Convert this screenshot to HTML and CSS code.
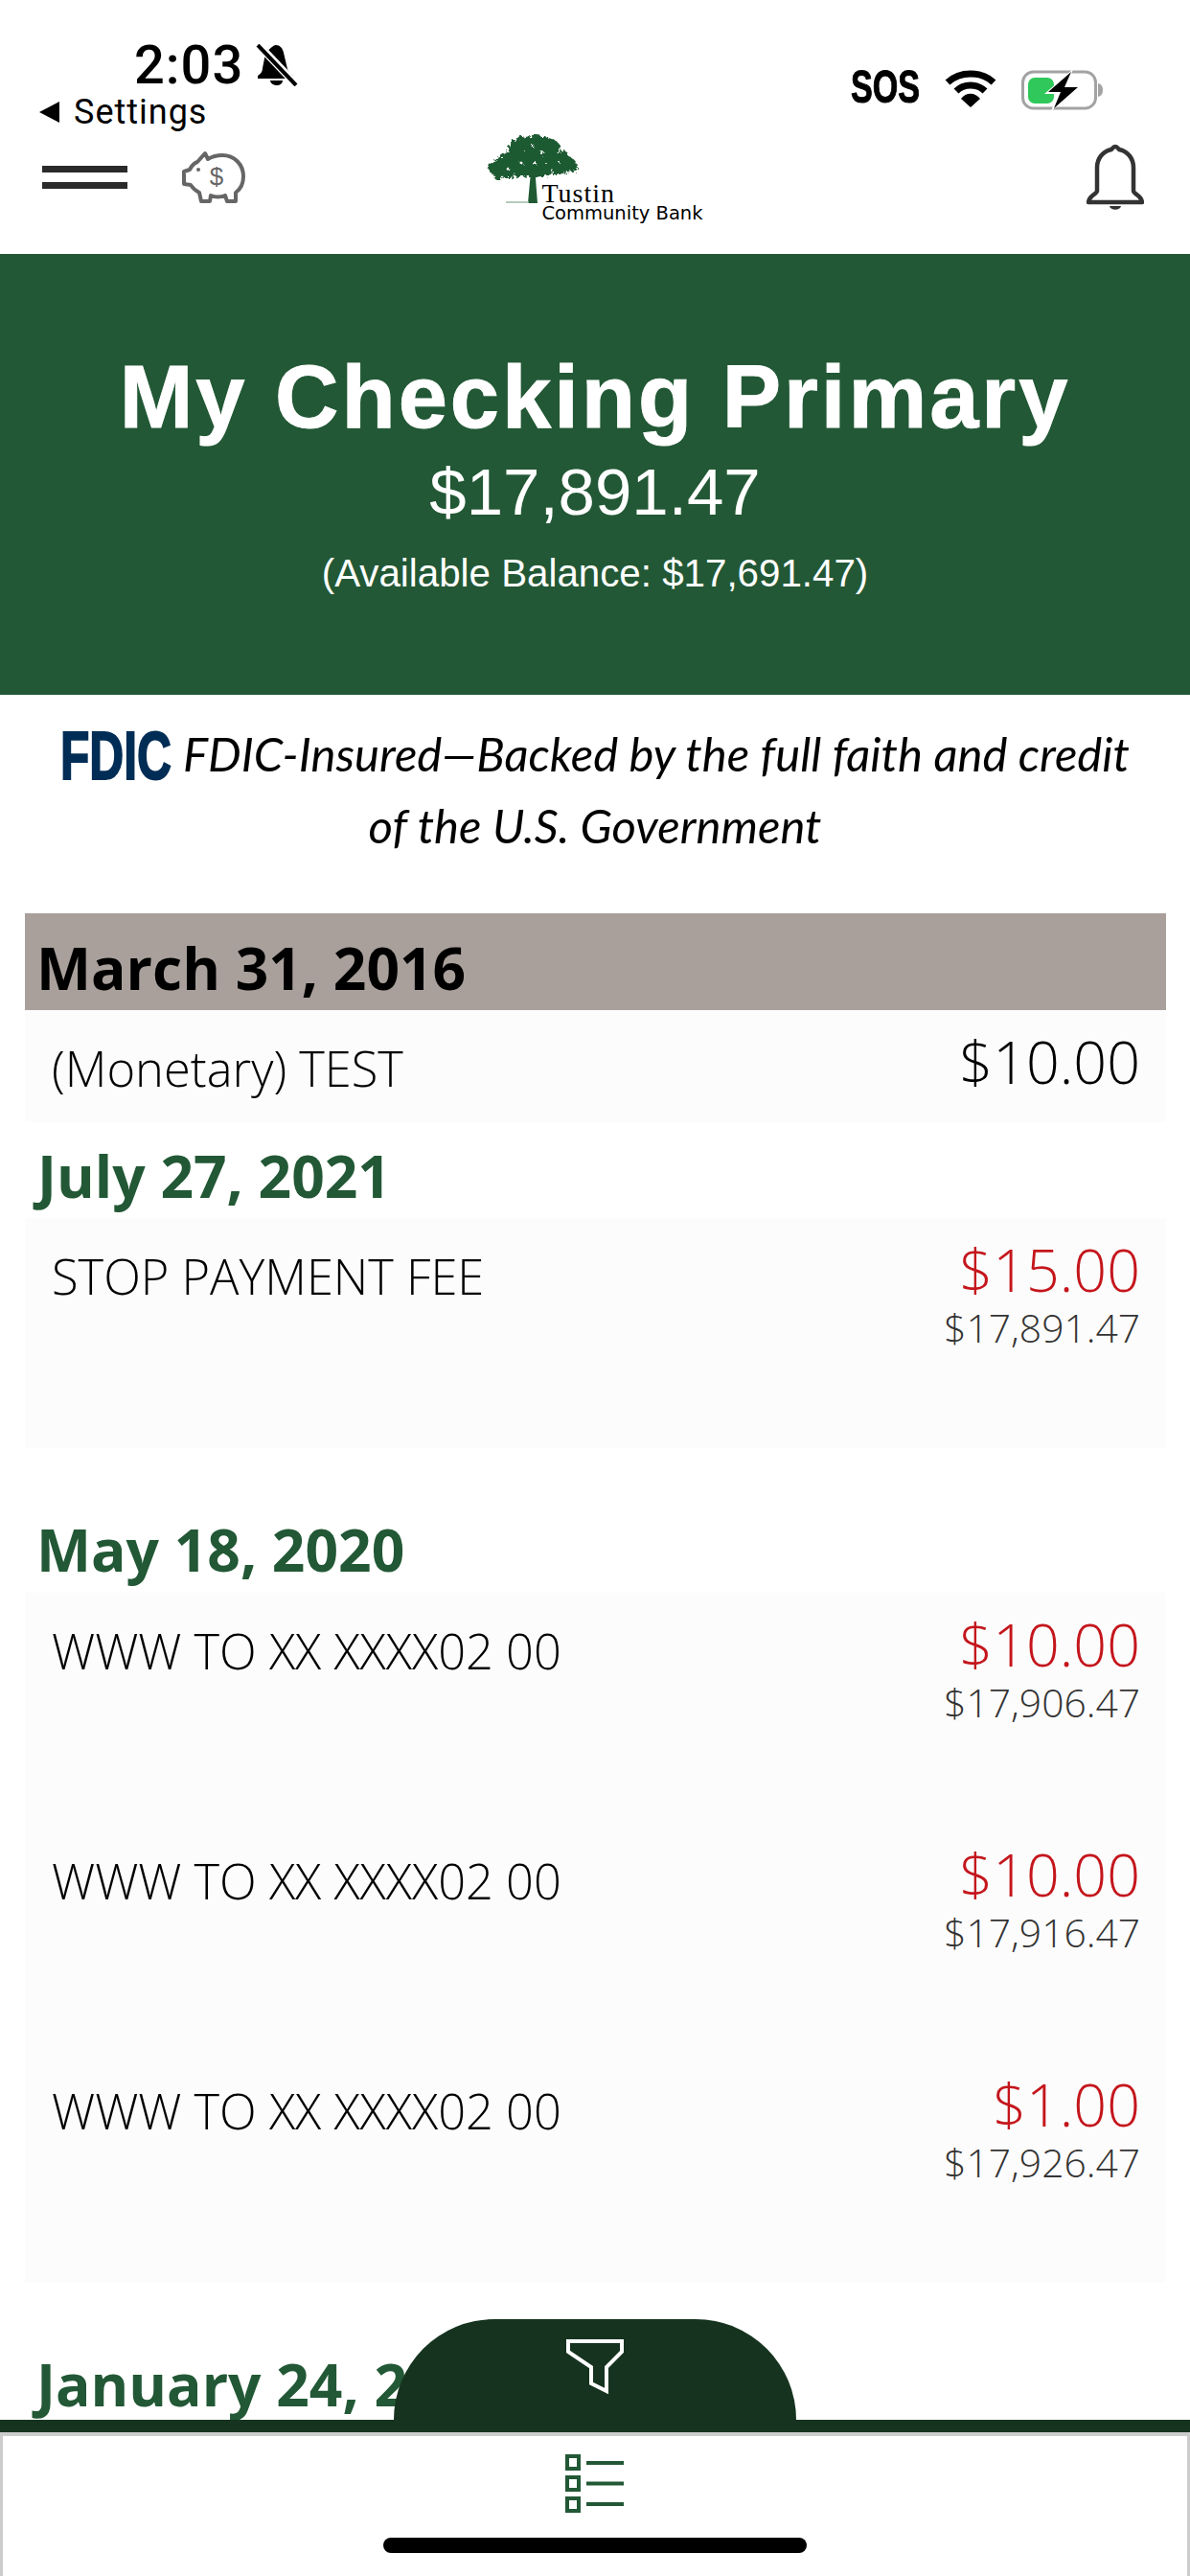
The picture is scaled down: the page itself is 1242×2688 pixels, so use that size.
FILE: index.html
```html
<!DOCTYPE html>
<html>
    <head>
        <meta charset="utf-8">
        <title>My Checking Primary</title>
        <link rel="stylesheet" href="styles.css">
    </head>
    <body>
        <div class="page">
            <div class="top">
                <div class="status">
                    <div class="status_left">
                        <div class="time_row">
                            <span class="time">2:03</span>
                            <svg class="mute" width="44" height="44" viewBox="0 0 44 44">
                                <path d="M21 1c4 0 7 3 8 8l4 17c1 3 3 5 6 7v3H2v-3c3-2 5-4 5-8l2-10c1-6 5-10 8-12 1-1 2-2 4-2z" fill="#000"/>
                                <path d="M15 38h13c0 3-3 5-6 5s-7-2-7-5z" fill="#000"/>
                                <path d="M2 0L42 42" stroke="#fff" stroke-width="8"/>
                                <path d="M2 1L42 43" stroke="#000" stroke-width="4"/>
                            </svg>
                        </div>
                        <div class="back_row">
                            <svg width="24" height="24" viewBox="0 0 24 24"><path d="M22 1V23L1 12Z" fill="#000"/></svg>
                            <span>Settings</span>
                        </div>
                    </div>
                    <div class="status_right">
                        <div class="sos_box"><span class="sos">SOS</span></div>
                        <svg width="54" height="40" viewBox="0 0 54 40">
                            <path d="M3 14C16 2 38 2 51 14" fill="none" stroke="#000" stroke-width="7"/>
                            <path d="M12 23C20 15 34 15 42 23" fill="none" stroke="#000" stroke-width="7"/>
                            <path d="M17 31C22 24 32 24 37 31L27 40Z" fill="#000"/>
                        </svg>
                        <svg width="88" height="44" viewBox="0 0 88 44">
                            <rect x="1.5" y="3" width="76" height="38" rx="11" fill="#fff" stroke="#a3a3a3" stroke-width="3"/>
                            <rect x="7" y="9" width="27" height="27" rx="7" fill="#30c85a"/>
                            <path d="M80 15c4 1 5 4 5 7s-1 6-5 7z" fill="#a3a3a3"/>
                            <path d="M54 0L24 26H38L31 44L63 17H48Z" fill="#fff"/>
                            <path d="M52 3L28 24H41L34 41L59 19H45Z" fill="#000"/>
                        </svg>
                    </div>
                </div>
                <div class="nav">
                    <div class="nav_left">
                        <div class="burger"><div></div><div></div></div>
                        <svg class="piggy" width="66" height="56" viewBox="0 0 66 56">
                            <path d="M24 3l3 6c5-3 10-4 15-4 13 0 22 10 22 22 0 8-4 14-8 17v9h-9l-2-6c-5 2-10 2-15 0l-1 6h-9l-2-9c-4-2-7-5-9-8l-7-1V22l6-2c2-4 5-7 8-8z" fill="#fff" stroke="#666" stroke-width="4" stroke-linejoin="round"/>
                            <circle cx="17" cy="20" r="2" fill="#666"/>
                            <text x="36" y="36" class="piggy_sign">$</text>
                        </svg>
                    </div>
                    <div class="logo">
                        <svg width="96" height="74" viewBox="0 0 96 74">
                            <filter id="rough" x="-10%" y="-10%" width="120%" height="120%">
                                <feTurbulence type="fractalNoise" baseFrequency="0.35" numOctaves="2" seed="4"/>
                                <feDisplacementMap in="SourceGraphic" scale="7"/>
                            </filter>
                            <g filter="url(#rough)">
                                <g fill="#1f5a32">
                                    <ellipse cx="50" cy="14" rx="27" ry="12"/>
                                    <ellipse cx="46" cy="30" rx="36" ry="15"/>
                                    <ellipse cx="70" cy="31" rx="23" ry="11"/>
                                    <ellipse cx="22" cy="36" rx="20" ry="10"/>
                                    <circle cx="6" cy="34" r="5"/>
                                    <circle cx="12" cy="44" r="4"/>
                                    <circle cx="90" cy="34" r="5"/>
                                    <circle cx="36" cy="6" r="4"/>
                                    <circle cx="52" cy="4" r="4"/>
                                    <circle cx="66" cy="9" r="4"/>
                                    <circle cx="28" cy="20" r="6"/>
                                    <circle cx="80" cy="22" r="5"/>
                                </g>
                                <g fill="#fff">
                                    <circle cx="48" cy="12" r="1.5"/>
                                    <circle cx="58" cy="20" r="2"/>
                                    <circle cx="36" cy="30" r="1.5"/>
                                    <circle cx="50" cy="30" r="2"/>
                                    <circle cx="22" cy="36" r="1.5"/>
                                    <circle cx="68" cy="38" r="1.5"/>
                                    <circle cx="40" cy="18" r="1"/>
                                    <circle cx="62" cy="30" r="1"/>
                                    <circle cx="28" cy="42" r="1.5"/>
                                    <circle cx="76" cy="30" r="1"/>
                                </g>
                            </g>
                            <path d="M46 40H51V46L53 72H43L45 50Z" fill="#1f5a32"/>
                            <path d="M20 71H44" stroke="#9dbba6" stroke-width="1.5"/>
                        </svg>
                        <div class="logo_text">
                            <div class="logo_name">Tustin</div>
                            <div class="logo_sub">Community Bank</div>
                        </div>
                    </div>
                    <div class="nav_right">
                        <svg width="60" height="70" viewBox="0 0 60 70">
                            <path d="M30 3c2 0 3 2 4 3 9 2 15 9 15 19v24c0 4 8 4 9 12H2c1-8 9-8 9-12V25C11 15 17 8 26 6c1-1 2-3 4-3z" fill="none" stroke="#333" stroke-width="4.500" stroke-linejoin="round"/>
                            <path d="M24 65H36C35 70 25 70 24 65Z" fill="#333"/>
                        </svg>
                    </div>
                </div>
            </div>

            <div class="account">
                <div class="account_name">My Checking Primary</div>
                <div class="account_total">$17,891.47</div>
                <div class="account_avail">(Available Balance: $17,691.47)</div>
            </div>

            <div class="fdic">
                <span class="fdic_box"><span class="fdic_mark">FDIC</span></span>FDIC-Insured—Backed by the full faith and credit<br>of the U.S. Government
            </div>

            <div class="list">
                <div class="day day_pending">March 31, 2016</div>
                <div class="card">
                    <div class="row row_short">
                        <div class="label">(Monetary) TEST</div>
                        <div class="money"><div class="amount">$10.00</div></div>
                    </div>
                </div>

                <div class="day day_july">July 27, 2021</div>
                <div class="card">
                    <div class="row">
                        <div class="label">STOP PAYMENT FEE</div>
                        <div class="money"><div class="amount debit">$15.00</div><div class="balance">$17,891.47</div></div>
                    </div>
                </div>

                <div class="day day_gap">May 18, 2020</div>
                <div class="card">
                    <div class="row">
                        <div class="label">WWW TO XX XXXX02 00</div>
                        <div class="money"><div class="amount debit">$10.00</div><div class="balance">$17,906.47</div></div>
                    </div>
                    <div class="row">
                        <div class="label">WWW TO XX XXXX02 00</div>
                        <div class="money"><div class="amount debit">$10.00</div><div class="balance">$17,916.47</div></div>
                    </div>
                    <div class="row">
                        <div class="label">WWW TO XX XXXX02 00</div>
                        <div class="money"><div class="amount debit">$1.00</div><div class="balance">$17,926.47</div></div>
                    </div>
                </div>

                <div class="day day_last">January 24, 2020</div>
            </div>

            <div class="bottom">
                <div class="dome">
                    <svg width="60" height="58" viewBox="0 0 60 58">
                        <path d="M2 2H58V13L42 29V54L26 46V29L2 13Z" fill="none" stroke="#fff" stroke-width="4"/>
                    </svg>
                </div>
                <div class="bar"></div>
                <div class="tabs">
                    <svg width="62" height="62" viewBox="0 0 62 62" class="list_icon">
                        <rect x="2" y="2" width="12" height="13" fill="none" stroke="#225835" stroke-width="4"/>
                        <rect x="2" y="24" width="12" height="13" fill="none" stroke="#225835" stroke-width="4"/>
                        <rect x="2" y="46" width="12" height="13" fill="none" stroke="#225835" stroke-width="4"/>
                        <path d="M22 9H61M22 30.500H61M22 52H61" stroke="#225835" stroke-width="4"/>
                    </svg>
                    <div class="home_bar"></div>
                </div>
            </div>
        </div>
    </body>
</html>
```

FILE: styles.css
```css
body {
    margin: 0;
    font-family: "Open Sans", sans-serif;
    background: #ffffff;
    color: #000000;
}
.page {
    width: 1242px;
    height: 2688px;
    position: relative;
    overflow: hidden;
}

/* status bar + nav */
.top {
    height: 265px;
    box-sizing: border-box;
    padding-top: 40px;
}
.status {
    display: flex;
    justify-content: space-between;
    height: 100px;
}
.status_left {
    padding-left: 40px;
}
.time_row {
    display: flex;
    align-items: center;
    gap: 13px;
    padding-left: 100px;
    height: 56px;
}
.time {
    font-family: Roboto, sans-serif;
    font-size: 56px;
    font-weight: 500;
    line-height: 56px;
    letter-spacing: 1px;
}
.back_row {
    display: flex;
    align-items: center;
    gap: 13px;
    height: 40px;
    margin-top: 1px;
    font-family: Roboto, sans-serif;
    font-size: 36px;
    letter-spacing: 1px;
}
.status_right {
    display: flex;
    align-items: flex-start;
    gap: 26px;
    padding: 32px 88px 0 0;
}
.sos_box {
    width: 72px;
    height: 36px;
}
.sos {
    display: block;
    font-family: "Liberation Sans", sans-serif;
    font-weight: 700;
    font-size: 48px;
    line-height: 38px;
    -webkit-text-stroke: 1px #000;
    transform: scaleX(0.71);
    transform-origin: left;
}
.nav {
    display: grid;
    grid-template-columns: 1fr auto 1fr;
    grid-template-rows: 70px;
    align-items: center;
    margin-top: 10px;
}
.nav_left {
    display: flex;
    align-items: center;
    gap: 57px;
    padding-left: 44px;
}
.burger {
    width: 89px;
}
.burger div {
    height: 7px;
    background: #2a2a2a;
}
.burger div + div {
    margin-top: 10px;
}
.piggy_sign {
    font-family: "Liberation Sans", sans-serif;
    font-size: 26px;
    fill: #666;
    text-anchor: middle;
}
.logo {
    display: flex;
    align-items: flex-start;
    align-self: start;
    margin-top: -10px;
}
.logo_text {
    margin-left: -39px;
    margin-top: 50px;
}
.logo_name {
    font-family: "Liberation Serif", serif;
    font-size: 28px;
    line-height: 23px;
    letter-spacing: 1px;
}
.logo_sub {
    font-family: "DejaVu Sans", sans-serif;
    font-size: 19.5px;
    line-height: 20px;
    white-space: nowrap;
}
.nav_right {
    display: flex;
    justify-content: flex-end;
    padding-right: 48px;
}

/* account header */
.account {
    height: 460px;
    box-sizing: border-box;
    padding-top: 99px;
    background: #225835;
    color: #ffffff;
    text-align: center;
    font-family: "Liberation Sans", sans-serif;
}
.account_name {
    font-size: 92px;
    font-weight: 700;
    line-height: 100px;
    letter-spacing: 3px;
    -webkit-text-stroke: 1px #ffffff;
}
.account_total {
    font-size: 69px;
    line-height: 76px;
    margin-top: 12px;
}
.account_avail {
    margin-top: 25px;
    font-size: 40.3px;
    line-height: 44px;
}

/* fdic notice */
.fdic {
    padding-top: 24px;
    height: 228px;
    box-sizing: border-box;
    text-align: center;
    font-family: Lato, sans-serif;
    font-style: italic;
    font-size: 49px;
    line-height: 75px;
}
.fdic_box {
    display: inline-block;
    width: 115px;
    height: 50px;
    margin-right: 13px;
    vertical-align: -8px;
    text-align: left;
}
.fdic_mark {
    display: block;
    font-family: "Liberation Sans", sans-serif;
    font-style: normal;
    font-weight: 700;
    font-size: 70px;
    line-height: 50px;
    color: #002d56;
    -webkit-text-stroke: 2px #002d56;
    transform: scaleX(0.71);
    transform-origin: left;
}

/* transactions */
.list {
    padding: 0 25px 0 26px;
}
.day {
    font-weight: 700;
    font-size: 60.5px;
    color: #225835;
    padding-left: 12px;
    box-sizing: border-box;
}
.day_pending {
    height: 101px;
    padding-top: 12px;
    line-height: 89px;
    background: #a9a09c;
    color: #000000;
}
.day_july {
    height: 100px;
    padding-top: 12px;
    line-height: 88px;
    padding-left: 13px;
}
.day_gap {
    height: 151px;
    padding-top: 60px;
    line-height: 91px;
}
.day_last {
    height: 151px;
    padding-top: 45px;
    line-height: 122px;
    white-space: nowrap;
}
.card {
    background: #fcfcfc;
}
.row {
    display: flex;
    justify-content: space-between;
    align-items: flex-start;
    height: 240px;
    box-sizing: border-box;
    padding: 19px 27px 0 28px;
}
.row_short {
    height: 117px;
}
.label {
    font-weight: 300;
    font-size: 50.6px;
    line-height: 64px;
    margin-top: 10px;
}
.money {
    text-align: right;
    font-weight: 300;
}
.amount {
    font-size: 61px;
    line-height: 70px;
}
.debit {
    color: #c4161c;
}
.balance {
    font-size: 40.8px;
    line-height: 50px;
    color: #333333;
}

/* bottom tabs, sits over the list */
.bottom {
    position: absolute;
    left: 0;
    right: 0;
    bottom: 0;
}
.dome {
    width: 420px;
    height: 105px;
    margin: 0 auto;
    box-sizing: border-box;
    padding-top: 21px;
    background: #16331f;
    border-radius: 105px 105px 0 0;
    text-align: center;
}
.bar {
    height: 13px;
    background: #16331f;
}
.tabs {
    height: 150px;
    box-sizing: border-box;
    background: #ffffff;
    border: 3px solid #cccccc;
    border-top-width: 4px;
    border-bottom: 0;
    padding-top: 19px;
    display: flex;
    flex-direction: column;
    align-items: center;
}
.home_bar {
    width: 442px;
    height: 16px;
    margin-top: 25px;
    border-radius: 8px;
    background: #000000;
}
```
